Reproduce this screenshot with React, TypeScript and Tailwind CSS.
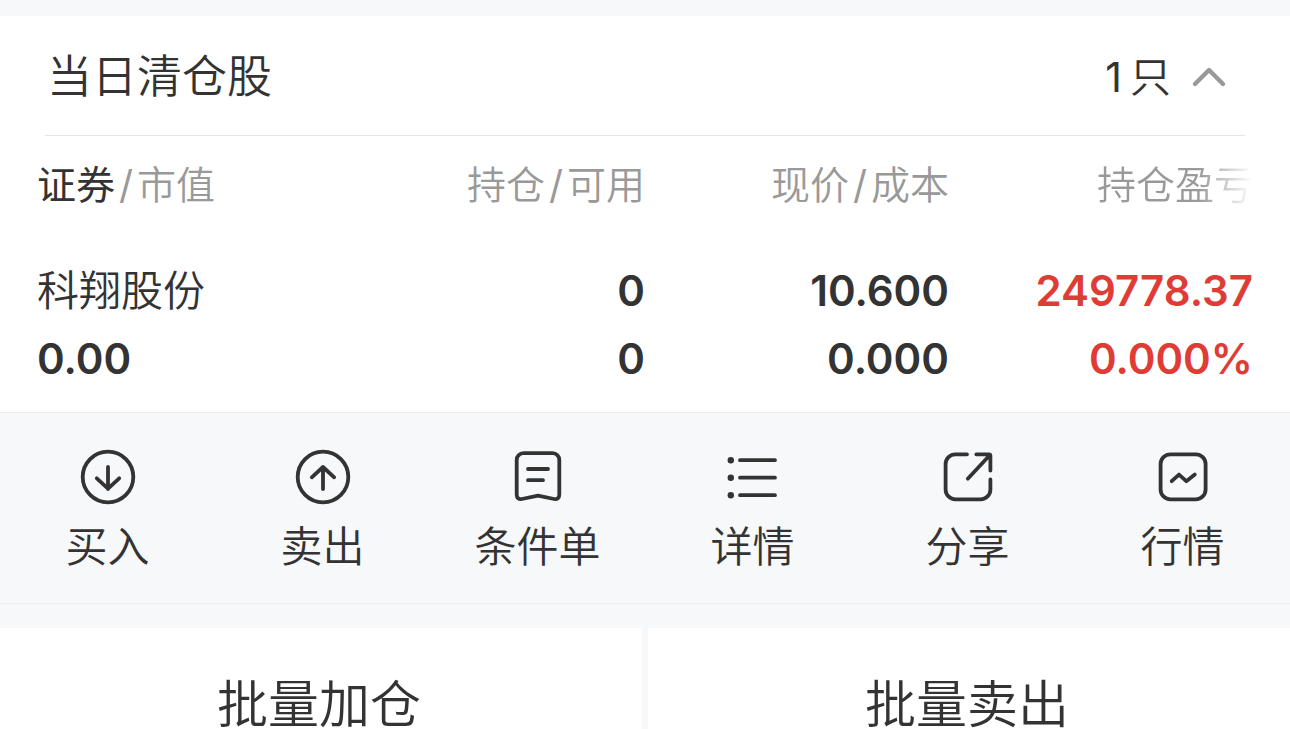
import type { ReactNode } from "react";

const actions: { label: string; icon: ReactNode }[] = [
  {
    label: "买入",
    icon: (
      <>
        <circle cx="30" cy="30" r="25.3" />
        <path d="M30 20v22M18.8 31.3 30 41.6l11.2-10.3" />
      </>
    ),
  },
  {
    label: "卖出",
    icon: (
      <>
        <circle cx="30" cy="30" r="25.3" />
        <path d="M30 42V20M18.8 30.3 30 20l11.2 10.3" />
      </>
    ),
  },
  {
    label: "条件单",
    icon: (
      <path d="M15.5 6.2h29a6.8 6.8 0 0 1 6.8 6.8v34.6c0 3.4-2 5-5.2 4.4L30 48.6 13.9 52c-3.2.6-5.2-1-5.2-4.4V13a6.8 6.8 0 0 1 6.8-6.8ZM20 22h20M20 33.2h15" />
    ),
  },
  {
    label: "详情",
    icon: (
      <>
        <path d="M17 13.2h35M17 30.7h35M17 48.2h35" />
        <g fill="currentColor" stroke="none">
          <circle cx="7.8" cy="13.2" r="3.2" />
          <circle cx="7.8" cy="30.7" r="3.2" />
          <circle cx="7.8" cy="48.2" r="3.2" />
        </g>
      </>
    ),
  },
  {
    label: "分享",
    icon: (
      <path d="M29 7.3H17.4a9.8 9.8 0 0 0-9.8 9.8v25.4a9.8 9.8 0 0 0 9.8 9.8h25.2a9.8 9.8 0 0 0 9.8-9.8V32.5M38.3 7.3h12.6q1.5 0 1.5 1.5v14.8M51 9 29.8 31.7" />
    ),
  },
  {
    label: "行情",
    icon: (
      <>
        <rect x="7.6" y="7.3" width="45" height="45" rx="9.8" />
        <path d="m18.7 34.2 7.3-6.6 7.3 6.6 8.5-6.6" />
      </>
    ),
  },
];

function Slash() {
  return <span className="mx-1 font-normal">/</span>;
}

export default function App() {
  return (
    <main className="min-h-screen bg-[#f7f8fa] pt-4 font-['Inter','Noto_Sans_CJK_SC',sans-serif] font-[350] text-[#333]">
      <section className="bg-white">
        <header className="mx-[45px] flex h-[120px] items-center justify-between border-b border-[#e5e5e5] pt-0.5 pr-[18px] pl-0.5">
          <h2 className="text-[45px] leading-[60px] font-[350]">当日清仓股</h2>
          <button type="button" aria-expanded="true" className="flex items-center gap-5 text-[41px] leading-[60px]">
            <span className="flex gap-2">
              <span className="font-normal">1</span>
              <span>只</span>
            </span>
            <svg className="h-9 w-9" viewBox="0 0 36 36" fill="none" stroke="#999" strokeWidth="4.4" strokeLinecap="round" strokeLinejoin="round" aria-hidden="true">
              <path d="m4 25 14-14 14 14" />
            </svg>
          </button>
        </header>

        <div className="px-[37px] pt-[15px] pb-[19px]">
          <table className="w-full table-fixed text-right">
            <thead>
              <tr className="text-[39px] leading-[68px] text-[#999]">
                <th className="w-1/4 text-left font-[350] whitespace-nowrap">
                  <span className="font-normal text-[#333]">证券</span>
                  <Slash />
                  市值
                </th>
                <th className="w-1/4 font-[350] whitespace-nowrap">
                  持仓
                  <Slash />
                  可用
                </th>
                <th className="w-1/4 font-[350] whitespace-nowrap">
                  现价
                  <Slash />
                  成本
                </th>
                <th className="w-1/4 font-[350] whitespace-nowrap">
                  <span className="bg-linear-to-r from-[#999] from-65% to-[#999]/0 bg-clip-text text-transparent">持仓盈亏</span>
                </th>
              </tr>
            </thead>
            <tbody className="text-[42px] leading-[68px] font-semibold">
              <tr>
                <td className="pt-[38px] text-left">
                  <div className="font-[350]">科翔股份</div>
                  <div>0.00</div>
                </td>
                <td className="pt-[38px]">
                  <div>0</div>
                  <div>0</div>
                </td>
                <td className="pt-[38px]">
                  <div>10.600</div>
                  <div>0.000</div>
                </td>
                <td className="pt-[38px] text-[#e03c36]">
                  <div>249778.37</div>
                  <div>0.000%</div>
                </td>
              </tr>
            </tbody>
          </table>
        </div>
      </section>

      <nav className="grid h-48 grid-cols-6 border-y border-[#ebecee]">
        {actions.map((a) => (
          <button key={a.label} type="button" className="flex flex-col items-center gap-2.5 pt-[34px] text-[42px] leading-[60px]">
            <svg className="h-[60px] w-[60px]" viewBox="0 0 60 60" fill="none" stroke="currentColor" strokeWidth="3.8" strokeLinecap="round" strokeLinejoin="round" aria-hidden="true">
              {a.icon}
            </svg>
            {a.label}
          </button>
        ))}
      </nav>

      <div className="mt-6 grid grid-cols-2 gap-1.5 text-[51px] leading-[49px]">
        <button type="button" className="bg-white pt-[52px] pr-1">批量加仓</button>
        <button type="button" className="bg-white pt-[52px] pr-1">批量卖出</button>
      </div>
    </main>
  );
}
